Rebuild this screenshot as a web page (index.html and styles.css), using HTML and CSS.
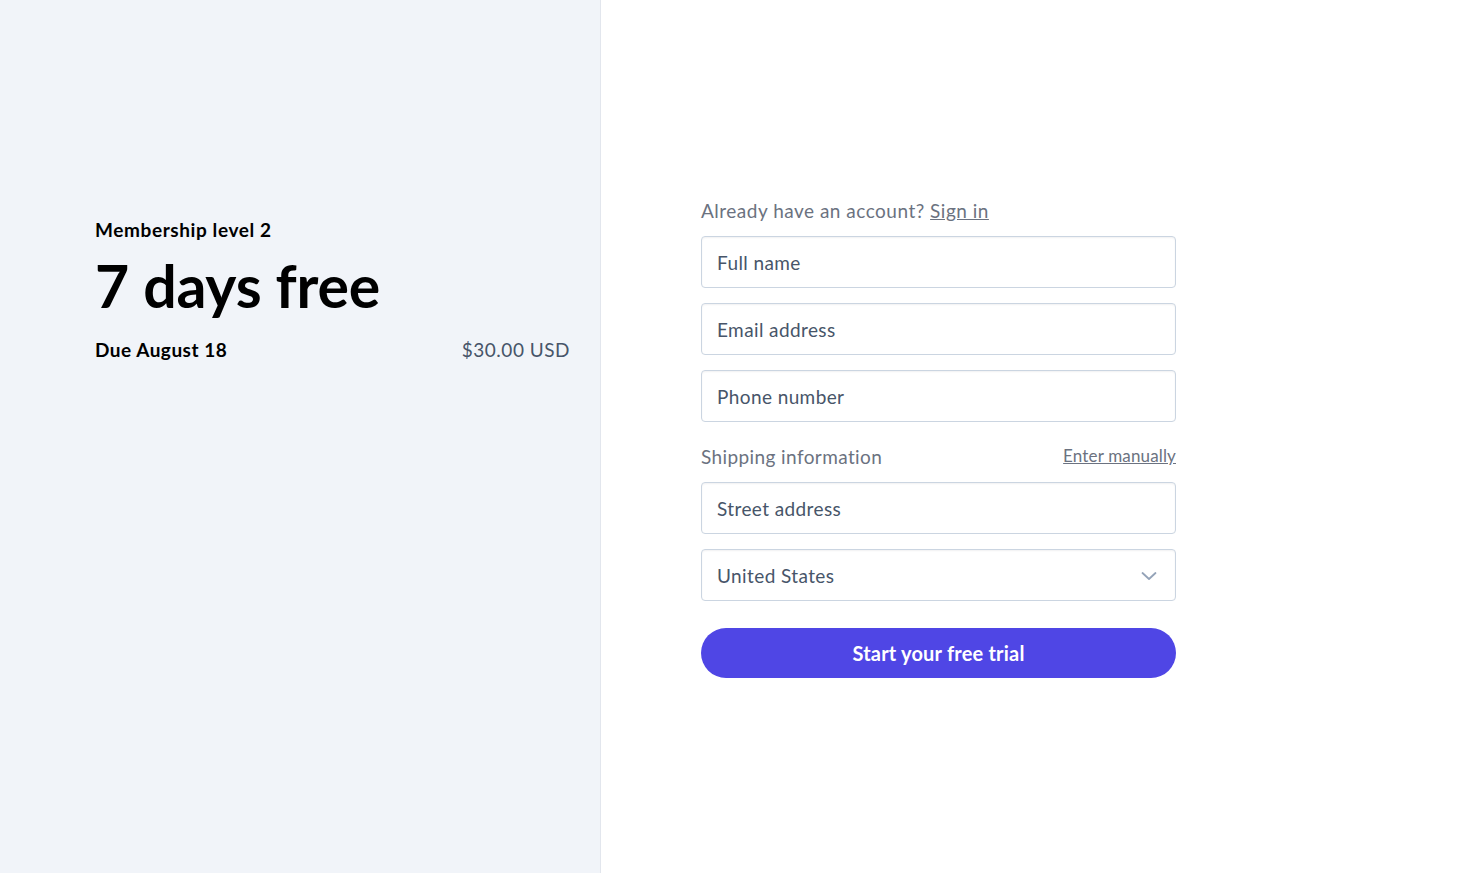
FILE: index.html
```html
<!DOCTYPE html>
<html lang="en">
<head>
<meta charset="utf-8">
<title>Checkout</title>
<link rel="stylesheet" href="styles.css">
</head>
<body>
<div class="page">
  <aside class="summary">
    <div class="summary-inner">
      <div class="level">Membership level 2</div>
      <h1 class="headline">7 days free</h1>
      <div class="due-row">
        <span class="due">Due August 18</span>
        <span class="price">$30.00 USD</span>
      </div>
    </div>
  </aside>
  <main class="main">
    <form class="form">
      <p class="signin">Already have an account? <a href="#" class="link">Sign in</a></p>
      <div class="field">Full name</div>
      <div class="field">Email address</div>
      <div class="field">Phone number</div>
      <div class="ship-row">
        <span class="ship-label">Shipping information</span>
        <a href="#" class="manual">Enter manually</a>
      </div>
      <div class="field">Street address</div>
      <div class="field select">
        <span>United States</span>
        <svg class="chev" width="16" height="10" viewBox="0 0 16 10"><path d="M1.5 2 L8 8 L14.5 2" fill="none" stroke="#94a3b8" stroke-width="1.8" stroke-linecap="round" stroke-linejoin="round"/></svg>
      </div>
      <button type="button" class="cta">Start your free trial</button>
    </form>
  </main>
</div>
</body>
</html>
```

FILE: styles.css
```css
* { box-sizing: border-box; }
html, body { margin: 0; height: 100%; }
body {
  font-family: Lato, "Noto Sans", sans-serif;
  color: #000;
  background: #fff;
}
.page {
  display: flex;
  height: 873px;
}
.summary {
  width: 601px;
  background: #f1f4f9;
  border-right: 1px solid #e2e6ed;
  padding: 218px 30px 0 95px;
}
.level {
  font-size: 19px;
  font-weight: 700;
  line-height: 24px;
  letter-spacing: 0.6px;
}
.headline {
  margin: 8px 0 0;
  font-size: 59px;
  font-weight: 700;
  line-height: 72px;
  letter-spacing: -0.2px;
}
.due-row {
  display: flex;
  justify-content: space-between;
  align-items: baseline;
  margin-top: 16px;
}
.due {
  font-size: 19px;
  font-weight: 700;
  letter-spacing: 0.5px;
}
.price {
  font-size: 19px;
  color: #475569;
  letter-spacing: 0.5px;
}
.main {
  flex: 1;
  padding: 198px 0 0 100px;
}
.form {
  width: 475px;
  display: flex;
  flex-direction: column;
}
.signin {
  margin: 0 0 12px;
  font-size: 19px;
  line-height: 26px;
  color: #6b7280;
  letter-spacing: 0.5px;
}
.link {
  color: #6b7280;
  text-decoration: underline;
}
.field {
  height: 52px;
  border: 1px solid #cbd5e1;
  border-radius: 4px;
  box-shadow: inset 0 1px 2px rgba(15, 23, 42, 0.06);
  padding: 0 15px;
  display: flex;
  align-items: center;
  font-size: 19px;
  letter-spacing: 0.4px;
  color: #475569;
  margin-bottom: 15px;
}
.select {
  justify-content: space-between;
  padding-right: 18px;
}
.chev { display: block; margin-top: 2px; }
.ship-row {
  display: flex;
  justify-content: space-between;
  align-items: baseline;
  margin: 7px 0 11px;
  line-height: 26px;
}
.ship-label {
  font-size: 19px;
  color: #6b7280;
  letter-spacing: 0.4px;
}
.manual {
  font-size: 17px;
  color: #6b7280;
  text-decoration: underline;
  letter-spacing: 0.15px;
  position: relative;
  top: -2px;
}
.cta {
  margin-top: 12px;
  height: 50px;
  border: none;
  border-radius: 25px;
  background: #4f46e5;
  color: #fff;
  font-family: inherit;
  font-size: 20px;
  font-weight: 700;
  letter-spacing: 0.2px;
  cursor: pointer;
}
```
